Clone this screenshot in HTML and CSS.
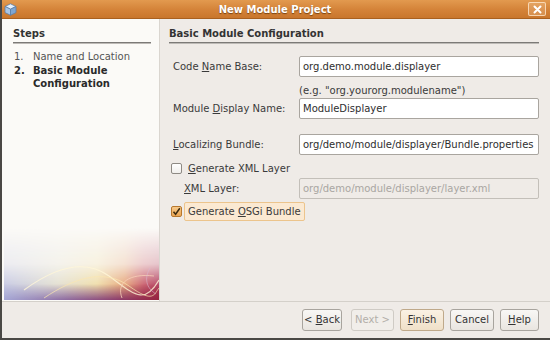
FILE: index.html
```html
<!DOCTYPE html>
<html>
<head>
<meta charset="utf-8">
<link rel="stylesheet" href="styles.css">
</head>
<body>
<div class="window">
  <div class="titlebar">
    <svg class="app-icon" width="13" height="13" viewBox="0 0 13 13">
      <polygon points="6.5,0.8 12,3.5 6.5,6.2 1,3.5" fill="#e6f0fb" stroke="#5a7fa8" stroke-width="0.8"/>
      <polygon points="1,3.5 6.5,6.2 6.5,12.3 1,9.6" fill="#a9c6e6" stroke="#5a7fa8" stroke-width="0.8"/>
      <polygon points="12,3.5 6.5,6.2 6.5,12.3 12,9.6" fill="#7fa6d2" stroke="#5a7fa8" stroke-width="0.8"/>
    </svg>
    <div class="title">New Module Project</div>
    <div class="close">
      <svg width="9" height="9" viewBox="0 0 9 9"><path d="M1.5 1.5 L7.5 7.5 M7.5 1.5 L1.5 7.5" stroke="#ffffff" stroke-width="2" stroke-linecap="round"/></svg>
    </div>
  </div>
  <div class="main">
    <div class="steps-panel">
      <div class="steps-head">Steps</div>
      <div class="steps">
        <div class="step"><span class="num">1.</span><span>Name and Location</span></div>
        <div class="step current"><span class="num">2.</span><span>Basic Module<br>Configuration</span></div>
      </div>
      <svg class="banner" width="155" height="72" viewBox="0 0 155 72">
        <defs>
          <linearGradient id="hz" x1="0" y1="0" x2="1" y2="0">
            <stop offset="0" stop-color="#bfc2e0"/>
            <stop offset="0.35" stop-color="#e0dccb"/>
            <stop offset="0.6" stop-color="#eed99e"/>
            <stop offset="0.78" stop-color="#e39a6a"/>
            <stop offset="0.9" stop-color="#c34a5a"/>
            <stop offset="1" stop-color="#a8284c"/>
          </linearGradient>
          <linearGradient id="bot" x1="0" y1="0" x2="1" y2="0">
            <stop offset="0" stop-color="#a4a6d4"/>
            <stop offset="0.4" stop-color="#8d6aa0"/>
            <stop offset="0.75" stop-color="#8a3a6a"/>
            <stop offset="1" stop-color="#96243e"/>
          </linearGradient>
          <linearGradient id="vf" x1="0" y1="0" x2="0" y2="1">
            <stop offset="0" stop-color="#fff" stop-opacity="0"/>
            <stop offset="0.5" stop-color="#fff" stop-opacity="0.25"/>
            <stop offset="0.8" stop-color="#fff" stop-opacity="0.85"/>
            <stop offset="1" stop-color="#fff" stop-opacity="1"/>
          </linearGradient>
          <linearGradient id="vb" x1="0" y1="0" x2="0" y2="1">
            <stop offset="0" stop-color="#fff" stop-opacity="0"/>
            <stop offset="1" stop-color="#fff" stop-opacity="1"/>
          </linearGradient>
          <mask id="m1"><rect width="155" height="72" fill="url(#vf)"/></mask>
          <mask id="m2"><rect y="56" width="155" height="16" fill="url(#vb)"/></mask>
        </defs>
        <rect width="155" height="72" fill="url(#hz)" mask="url(#m1)"/>
        <rect y="56" width="155" height="16" fill="url(#bot)" mask="url(#m2)"/>
        <path d="M20 62 C 50 40, 80 30, 105 48 S 140 78, 155 52" fill="none" stroke="#fff6d8" stroke-width="1.2" opacity="0.8"/>
        <path d="M40 70 C 70 50, 100 40, 125 58 S 150 66, 155 60" fill="none" stroke="#fbe7b0" stroke-width="1" opacity="0.7"/>
        <path d="M118 70 C 112 55, 125 45, 150 48" fill="none" stroke="#f6d0b8" stroke-width="1" opacity="0.8"/>
        <path d="M146 40 C 140 50, 142 60, 152 66" fill="none" stroke="#d8b8d0" stroke-width="0.8" opacity="0.7"/>
      </svg>
    </div>
    <div class="content">
      <div class="content-head">Basic Module Configuration</div>
      <div class="form">
        <div class="row r-code">
          <div class="label">Code <u>N</u>ame Base:</div>
          <div class="field">org.demo.module.displayer</div>
        </div>
        <div class="hint">(e.g. "org.yourorg.modulename")</div>
        <div class="row">
          <div class="label">Module <u>D</u>isplay Name:</div>
          <div class="field">ModuleDisplayer</div>
        </div>
        <div class="row r-bundle">
          <div class="label"><u>L</u>ocalizing Bundle:</div>
          <div class="field">org/demo/module/displayer/Bundle.properties</div>
        </div>
        <div class="check-row r-xmlcheck">
          <span class="checkbox"></span>
          <span class="check-label"><u>G</u>enerate XML Layer</span>
        </div>
        <div class="row r-xml">
          <div class="label sub"><u>X</u>ML Layer:</div>
          <div class="field disabled">org/demo/module/displayer/layer.xml</div>
        </div>
        <div class="check-row r-osgi">
          <span class="checkbox checked">
            <svg width="9" height="9" viewBox="0 0 9 9"><path d="M1.5 4.8 L3.6 7.3 L7.8 1.2" fill="none" stroke="#3a2a10" stroke-width="1.5"/></svg>
          </span>
          <span class="check-label focused">Generate <u>O</u>SGi Bundle</span>
        </div>
      </div>
    </div>
  </div>
  <div class="buttons">
    <div class="btn back">&lt; <u>B</u>ack</div>
    <div class="btn next disabled">Next &gt;</div>
    <div class="btn finish default"><u>F</u>inish</div>
    <div class="btn cancel">Cancel</div>
    <div class="btn help"><u>H</u>elp</div>
  </div>
</div>
</body>
</html>
```
FILE: styles.css
```css
* { box-sizing: border-box; }
html, body { margin: 0; padding: 0; }
body {
  width: 550px;
  height: 340px;
  overflow: hidden;
  font-family: "DejaVu Sans", "Liberation Sans", sans-serif;
  font-size: 10px;
  color: #3a3a3a;
  background: #efebe7;
}
u { text-decoration: underline; text-underline-offset: 1px; }

.window {
  width: 550px;
  height: 340px;
  display: flex;
  flex-direction: column;
  background: #efebe7;
  border-left: 2px solid #4a4845;
  border-bottom: 2px solid #4a4845;
}

.titlebar {
  height: 19px;
  flex: none;
  display: grid;
  grid-template-columns: 1fr auto 1fr;
  align-items: center;
  background: linear-gradient(#e29a4f, #d5843a 50%, #c9762c);
  border-bottom: 1px solid #a9601f;
  padding: 0 4px 0 2px;
}
.app-icon { justify-self: start; display: block; }
.title {
  color: #ffffff;
  font-weight: bold;
  font-size: 10px;
  text-shadow: 0 1px 1px #7a4310;
}
.close {
  justify-self: end;
  width: 18px;
  height: 14px;
  border: 1px solid rgba(255, 235, 210, 0.75);
  border-radius: 2px;
  background: rgba(255, 230, 200, 0.2);
  display: flex;
  align-items: center;
  justify-content: center;
}
.close svg { display: block; }

.main {
  height: 283px;
  flex: none;
  display: flex;
  border-bottom: 1px solid #d4d0ca;
}

.steps-panel {
  width: 158px;
  flex: none;
  background: #fbfaf7;
  border-right: 1px solid #dad6d0;
  display: flex;
  flex-direction: column;
  padding: 8px 0 0 0;
}
.steps-head {
  margin: 0 8px 0 11px;
  font-weight: bold;
  color: #333;
  line-height: 14px;
  padding-bottom: 1px;
  border-bottom: 1px solid #7c7a77;
  box-shadow: 0 1px 0 #bdbab6;
}
.steps {
  margin: 7px 0 0 12px;
  line-height: 13.5px;
}
.step { display: flex; color: #555; }
.step .num { width: 19px; flex: none; }
.step.current { font-weight: bold; color: #2a2a2a; }
.banner {
  margin-top: auto;
  margin-left: 2px;
  margin-bottom: 1px;
  display: block;
}

.content {
  flex: 1;
  padding: 8px 11px 0 9px;
}
.content-head {
  font-weight: bold;
  color: #333;
  line-height: 14px;
  padding-bottom: 1px;
  border-bottom: 1px solid #7c7a77;
  box-shadow: 0 1px 0 #bdbab6;
}
.form {
  padding-left: 4px;
  display: flex;
  flex-direction: column;
}
.row {
  display: flex;
  align-items: center;
}
.label {
  width: 126px;
  flex: none;
  color: #3a3a3a;
}
.label.sub { padding-left: 11px; }
.field {
  flex: 1;
  height: 21px;
  background: #ffffff;
  border: 1px solid #a9a59f;
  border-radius: 2px;
  padding: 0 3px;
  line-height: 19px;
  color: #2e2e2e;
  white-space: nowrap;
  overflow: hidden;
}
.field.disabled {
  background: #efebe7;
  border-color: #c3bfb9;
  color: #a9a6a2;
}
.r-code { margin-top: 13px; }
.hint {
  margin: 7px 0 0 126px;
  line-height: 14px;
  color: #3a3a3a;
}
.r-bundle { margin-top: 15px; }
.check-row {
  display: flex;
  align-items: center;
  margin-left: -2px;
}
.r-xmlcheck { margin-top: 6px; height: 14px; }
.r-xml { margin-top: 3px; }
.r-osgi { margin-top: 3px; }
.checkbox {
  width: 11px;
  height: 11px;
  flex: none;
  border: 1px solid #8e8a84;
  border-radius: 2px;
  background: linear-gradient(#ffffff, #f1efec);
  display: flex;
  align-items: center;
  justify-content: center;
}
.checkbox.checked {
  background: linear-gradient(#f7c98a, #eba654);
  border-color: #b7782e;
}
.checkbox svg { display: block; }
.check-label {
  margin-left: 4px;
  color: #3a3a3a;
  line-height: 15px;
  padding: 0 2px;
}
.check-label.focused {
  margin-left: 2px;
  padding: 1px 3px;
  background: #fbe9d2;
  border: 1px solid #ecc48c;
  border-radius: 2px;
}

.buttons {
  flex: 1;
  display: flex;
  justify-content: flex-end;
  align-items: flex-start;
  padding: 7px 11px 0 0;
  gap: 6px;
}
.btn {
  height: 22px;
  line-height: 20px;
  padding: 0;
  border: 1px solid #a8a49e;
  border-radius: 3px;
  background: linear-gradient(#f8f7f5, #e9e5e0);
  color: #333;
  text-align: center;
  white-space: nowrap;
}
.btn.back { width: 40px; margin-right: 3px; }
.btn.next { width: 43px; }
.btn.finish { width: 44px; }
.btn.cancel { width: 44px; }
.btn.help { width: 39px; }
.btn.disabled {
  color: #b3afa9;
  border-color: #cfcbc5;
  background: #f1eeea;
}
.btn.default {
  background: linear-gradient(#faf1e4, #f0e0c8);
  border-color: #bfa98a;
}
```
